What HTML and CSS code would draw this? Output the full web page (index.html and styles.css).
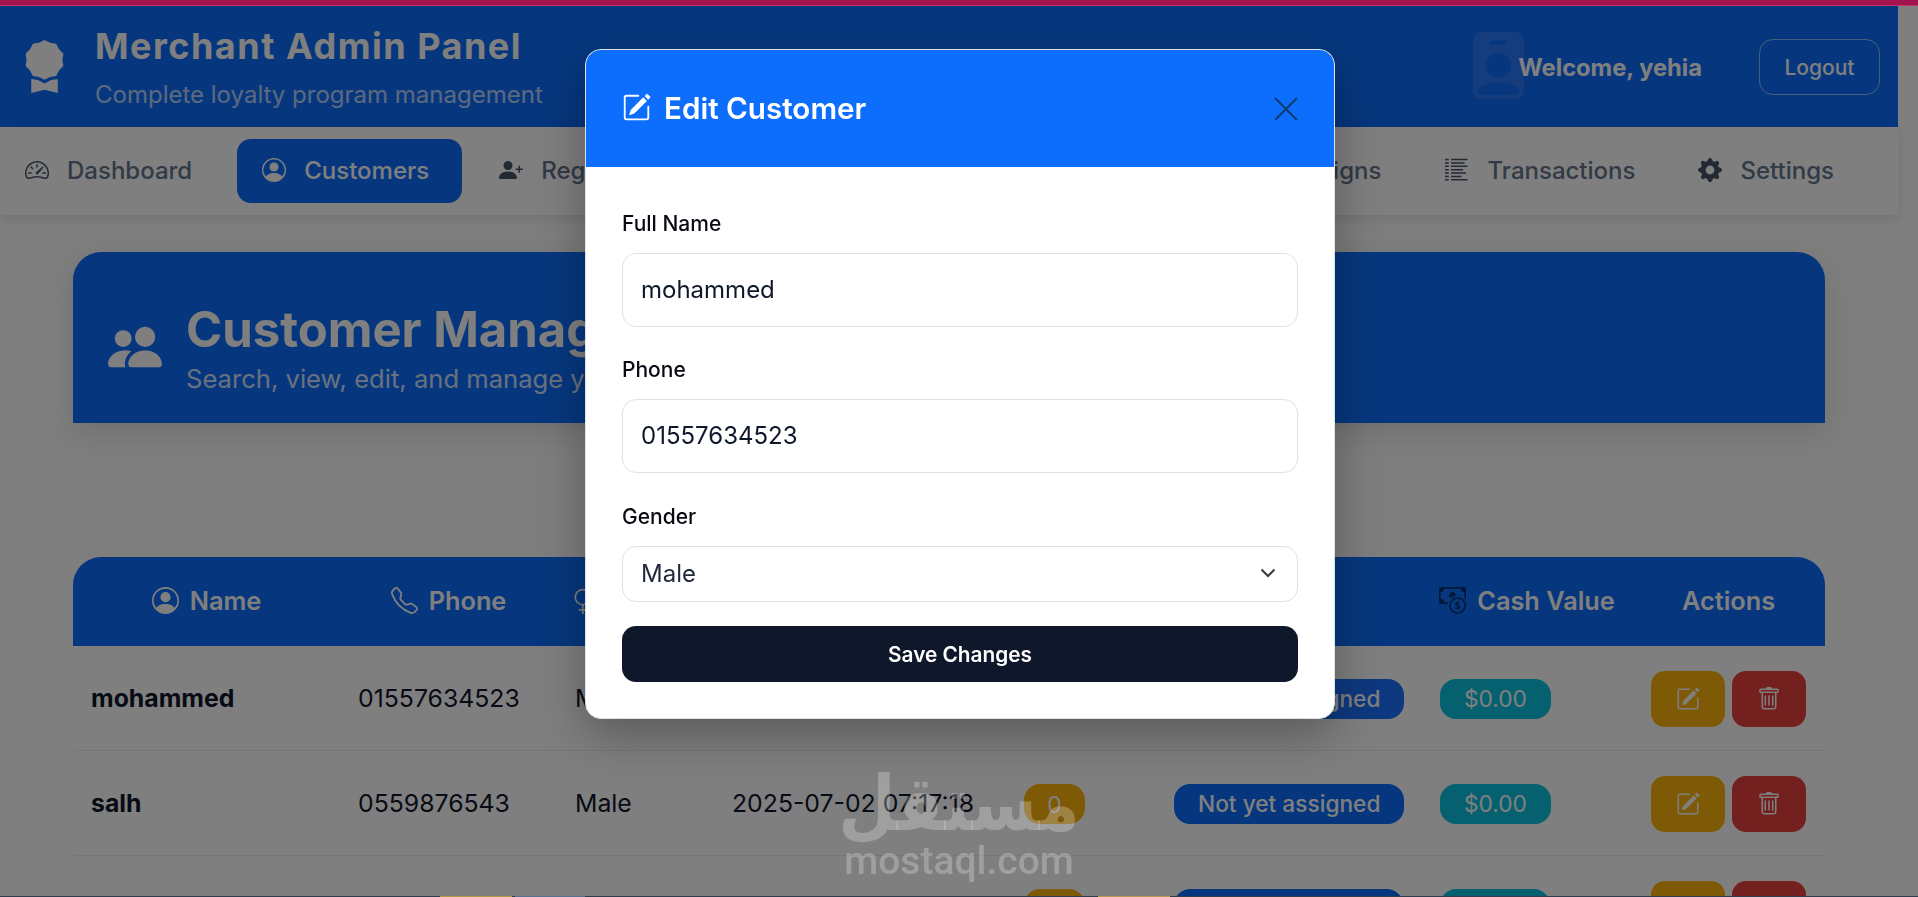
FILE: index.html
```html
<!DOCTYPE html>
<html lang="en">
<head>
<meta charset="utf-8">
<title>Merchant Admin Panel</title>
<link rel="stylesheet" href="styles.css">
</head>
<body>
<div class="page">
  <header class="topbar">
    <div class="brand">
      <svg class="brand-icon" viewBox="0 0 16 16" fill="currentColor"><path d="m8 0 1.669.864 1.858.282.842 1.68 1.337 1.32L13.4 6l.306 1.854-1.337 1.32-.842 1.68-1.858.282L8 12l-1.669-.864-1.858-.282-.842-1.68-1.337-1.32L2.6 6l-.306-1.854 1.337-1.32.842-1.68L6.331.864z"/><path d="M4 11.794V16l4-1 4 1v-4.206l-2.018.306L8 13.126 6.018 12.1z"/></svg>
      <div class="brand-text">
        <div class="brand-title">Merchant Admin Panel</div>
        <div class="brand-sub">Complete loyalty program management</div>
      </div>
    </div>
    <div class="user">
      <svg class="user-icon" viewBox="0 0 16 16" fill="currentColor"><path d="M2 2a2 2 0 0 1 2-2h8a2 2 0 0 1 2 2v12a2 2 0 0 1-2 2H4a2 2 0 0 1-2-2zm4.500 0a.5.5 0 0 0 0 1h3a.5.5 0 0 0 0-1zM8 11a3 3 0 1 0 0-6 3 3 0 0 0 0 6m5 2.755C12.146 12.825 10.623 12 8 12s-4.146.826-5 1.755V14a1 1 0 0 0 1 1h8a1 1 0 0 0 1-1z"/></svg>
      <span class="welcome">Welcome, yehia</span>
      <button class="logout">Logout</button>
    </div>
  </header>

  <nav class="nav">
    <a class="nav-link">
      <svg class="nav-icon" viewBox="0 0 16 16" fill="currentColor"><path d="M8 4a.5.5 0 0 1 .5.5V6a.5.5 0 0 1-1 0V4.500A.5.5 0 0 1 8 4M3.732 5.732a.5.5 0 0 1 .707 0l.915.914a.5.5 0 1 1-.708.708l-.914-.915a.5.5 0 0 1 0-.707M2 10a.5.5 0 0 1 .5-.5h1.586a.5.5 0 0 1 0 1H2.500A.5.5 0 0 1 2 10m9.500 0a.5.5 0 0 1 .5-.5h1.500a.5.5 0 0 1 0 1H12a.5.5 0 0 1-.5-.5m.754-4.246a.39.39 0 0 0-.527-.02L7.547 9.31a.91.91 0 1 0 1.302 1.258l3.434-4.297a.39.39 0 0 0-.029-.518z"/><path fill-rule="evenodd" d="M0 10a8 8 0 1 1 15.547 2.661c-.442 1.253-1.845 1.602-2.932 1.25C11.309 13.488 9.475 13 8 13c-1.474 0-3.31.488-4.615.911-1.087.352-2.49.003-2.932-1.25A8 8 0 0 1 0 10m8-7a7 7 0 0 0-6.603 9.329c.203.575.923.876 1.68.63C4.397 12.533 6.358 12 8 12s3.604.532 4.923.96c.757.245 1.477-.056 1.68-.631A7 7 0 0 0 8 3"/></svg>
      Dashboard
    </a>
    <a class="nav-link active">
      <svg class="nav-icon" viewBox="0 0 16 16" fill="currentColor"><path d="M11 6a3 3 0 1 1-6 0 3 3 0 0 1 6 0"/><path fill-rule="evenodd" d="M0 8a8 8 0 1 1 16 0A8 8 0 0 1 0 8m8-7a7 7 0 0 0-5.468 11.37C3.242 11.226 4.805 10 8 10s4.757 1.225 5.468 2.37A7 7 0 0 0 8 1"/></svg>
      Customers
    </a>
    <a class="nav-link">
      <svg class="nav-icon" viewBox="0 0 16 16" fill="currentColor"><path d="M1 14s-1 0-1-1 1-4 6-4 6 3 6 4-1 1-1 1zm5-6a3 3 0 1 0 0-6 3 3 0 0 0 0 6"/><path fill-rule="evenodd" d="M13.500 5a.5.5 0 0 1 .5.5V7h1.500a.5.5 0 0 1 0 1H14v1.500a.5.5 0 0 1-1 0V8h-1.500a.5.5 0 0 1 0-1H13V5.500a.5.5 0 0 1 .5-.5"/></svg>
      Register
    </a>
    <a class="nav-link push">Campaigns</a>
    <a class="nav-link">
      <svg class="nav-icon" viewBox="0 0 16 16" fill="currentColor"><path d="M0 .5h2.500v1H0zM4 .5h11v1H4zM0 2.800h2.500v1H0zM4 2.800h9v1H4zM0 5h2.500v1H0zM4 5h11v1H4zM0 7.300h2.500v1H0zM4 7.300h8v1H4zM0 9.500h2.500v1H0zM4 9.500h10v1H4zM0 11.800h2.500v1H0zM4 11.800h7v1H4zM0 14h2.500v1H0zM4 14h11v1H4z"/></svg>
      Transactions
    </a>
    <a class="nav-link">
      <svg class="nav-icon" viewBox="0 0 16 16" fill="currentColor"><path d="M9.405 1.050c-.413-1.400-2.397-1.400-2.810 0l-.1.34a1.464 1.464 0 0 1-2.105.872l-.31-.17c-1.283-.698-2.686.705-1.987 1.987l.169.311c.446.82.023 1.841-.872 2.105l-.34.1c-1.400.413-1.400 2.397 0 2.810l.34.1a1.464 1.464 0 0 1 .872 2.105l-.17.31c-.698 1.283.705 2.686 1.987 1.987l.311-.169a1.464 1.464 0 0 1 2.105.872l.1.34c.413 1.400 2.397 1.400 2.810 0l.1-.34a1.464 1.464 0 0 1 2.105-.872l.31.17c1.283.698 2.686-.705 1.987-1.987l-.169-.311a1.464 1.464 0 0 1 .872-2.105l.34-.1c1.400-.413 1.400-2.397 0-2.810l-.34-.1a1.464 1.464 0 0 1-.872-2.105l.17-.31c.698-1.283-.705-2.686-1.987-1.987l-.311.169a1.464 1.464 0 0 1-2.105-.872zM8 10.930a2.929 2.929 0 1 1 0-5.860 2.929 2.929 0 0 1 0 5.858z"/></svg>
      Settings
    </a>
  </nav>

  <main class="content">
    <section class="hero">
      <svg class="hero-icon" viewBox="0 0 16 16" fill="currentColor"><path d="M7 14s-1 0-1-1 1-4 5-4 5 3 5 4-1 1-1 1zm4-6a3 3 0 1 0 0-6 3 3 0 0 0 0 6m-5.784 6A2.240 2.240 0 0 1 5 13c0-1.355.68-2.750 1.936-3.720A6.300 6.300 0 0 0 5 9c-4 0-5 3-5 4s1 1 1 1zM4.500 8a2.500 2.500 0 1 0 0-5 2.500 2.500 0 0 0 0 5"/></svg>
      <div class="hero-text">
        <h1 class="hero-title">Customer Management</h1>
        <p class="hero-sub">Search, view, edit, and manage your customers</p>
      </div>
    </section>

    <table class="customers">
      <colgroup>
        <col class="c-name"><col class="c-phone"><col class="c-gender"><col class="c-date"><col class="c-points"><col class="c-tier"><col class="c-cash"><col class="c-actions">
      </colgroup>
      <thead>
        <tr>
          <th><svg class="th-icon" viewBox="0 0 16 16" fill="currentColor"><path d="M11 6a3 3 0 1 1-6 0 3 3 0 0 1 6 0"/><path fill-rule="evenodd" d="M0 8a8 8 0 1 1 16 0A8 8 0 0 1 0 8m8-7a7 7 0 0 0-5.468 11.37C3.242 11.226 4.805 10 8 10s4.757 1.225 5.468 2.37A7 7 0 0 0 8 1"/></svg>Name</th>
          <th><svg class="th-icon" viewBox="0 0 16 16" fill="currentColor"><path d="M3.654 1.328a.678.678 0 0 0-1.015-.063L1.605 2.300c-.483.484-.661 1.169-.45 1.770a17.600 17.600 0 0 0 4.168 6.608 17.600 17.600 0 0 0 6.608 4.168c.601.211 1.286.033 1.770-.45l1.034-1.034a.678.678 0 0 0-.063-1.015l-2.307-1.794a.68.68 0 0 0-.58-.122l-2.190.547a1.750 1.750 0 0 1-1.657-.459L5.482 8.062a1.750 1.750 0 0 1-.46-1.657l.548-2.190a.68.68 0 0 0-.122-.58zM1.884.511a1.745 1.745 0 0 1 2.612.163L6.290 2.980c.329.423.445.974.315 1.494l-.547 2.190a.68.68 0 0 0 .178.643l2.457 2.457a.68.68 0 0 0 .644.178l2.189-.547a1.750 1.750 0 0 1 1.494.315l2.306 1.794c.829.645.905 1.870.163 2.611l-1.034 1.034c-.74.74-1.846 1.065-2.877.702a18.600 18.600 0 0 1-7.010-4.420 18.600 18.600 0 0 1-4.420-7.009c-.362-1.030-.037-2.137.703-2.877z"/></svg>Phone</th>
          <th><svg class="th-icon" viewBox="0 0 16 16" fill="none" stroke="currentColor"><circle cx="7" cy="6" r="4.500"/><path d="M7 10.500V16M4.500 13.500h5"/></svg>Gender</th>
          <th>Registered</th>
          <th>Points</th>
          <th>Tier</th>
          <th><svg class="th-icon dark" viewBox="0 0 16 16" fill="currentColor"><path fill-rule="evenodd" d="M11 15a4 4 0 1 0 0-8 4 4 0 0 0 0 8m5-4a5 5 0 1 1-10 0 5 5 0 0 1 10 0"/><path d="M9.438 11.944c.047.596.518 1.060 1.363 1.116v.44h.375v-.443c.875-.061 1.386-.529 1.386-1.207 0-.618-.39-.936-1.090-1.100l-.296-.07v-1.200c.376.043.614.248.671.532h.658c-.047-.575-.54-1.024-1.329-1.073V8.500h-.375v.45c-.747.073-1.255.522-1.255 1.158 0 .562.378.92 1.007 1.066l.248.061v1.272c-.384-.058-.639-.27-.696-.563h-.668z"/><path d="M1 0a1 1 0 0 0-1 1v8a1 1 0 0 0 1 1h4.083q.088-.517.258-1H3a2 2 0 0 0-2-2V3a2 2 0 0 0 2-2h10a2 2 0 0 0 2 2v3.528c.38.34.717.728 1 1.154V1a1 1 0 0 0-1-1z"/><path d="M9.998 5.083 10 5a2 2 0 1 0-3.132 1.650 6 6 0 0 1 3.130-1.567"/></svg>Cash Value</th>
          <th>Actions</th>
        </tr>
      </thead>
      <tbody>
        <tr>
          <td class="name">mohammed</td><td>01557634523</td><td>Male</td><td>2025-07-02 07:17:18</td>
          <td><span class="badge points">0</span></td>
          <td><span class="badge tier bright">Not yet assigned</span></td>
          <td><span class="badge cash">$0.00</span></td>
          <td class="actions"><button class="act edit"><svg class="act-icon" viewBox="0 0 16 16" fill="currentColor"><path d="M15.502 1.940a.5.5 0 0 1 0 .706L14.459 3.690l-2-2L13.502.646a.5.5 0 0 1 .707 0l1.293 1.293zm-1.750 2.456-2-2L4.939 9.210a.5.5 0 0 0-.121.196l-.805 2.414a.25.25 0 0 0 .316.316l2.414-.805a.5.5 0 0 0 .196-.12l6.813-6.814z"/><path fill-rule="evenodd" d="M1 13.500A1.500 1.500 0 0 0 2.500 15h11a1.500 1.500 0 0 0 1.500-1.500v-6a.5.5 0 0 0-1 0v6a.5.5 0 0 1-.5.5h-11a.5.5 0 0 1-.5-.5v-11a.5.5 0 0 1 .5-.5H9a.5.5 0 0 0 0-1H2.500A1.500 1.500 0 0 0 1 2.500z"/></svg></button><button class="act del"><svg class="act-icon" viewBox="0 0 16 16" fill="currentColor"><path d="M5.500 5.500A.5.5 0 0 1 6 6v6a.5.5 0 0 1-1 0V6a.5.5 0 0 1 .5-.5m2.500 0a.5.5 0 0 1 .5.5v6a.5.5 0 0 1-1 0V6a.5.5 0 0 1 .5-.5m3 .5a.5.5 0 0 0-1 0v6a.5.5 0 0 0 1 0z"/><path d="M14.500 3a1 1 0 0 1-1 1H13v9a2 2 0 0 1-2 2H5a2 2 0 0 1-2-2V4h-.5a1 1 0 0 1-1-1V2a1 1 0 0 1 1-1H6a1 1 0 0 1 1-1h2a1 1 0 0 1 1 1h3.500a1 1 0 0 1 1 1zM4.118 4 4 4.059V13a1 1 0 0 0 1 1h6a1 1 0 0 0 1-1V4.059L11.882 4zM2.500 3h11V2h-11z"/></svg></button></td>
        </tr>
        <tr>
          <td class="name">salh</td><td>0559876543</td><td>Male</td><td>2025-07-02 07:17:18</td>
          <td><span class="badge points">0</span></td>
          <td><span class="badge tier">Not yet assigned</span></td>
          <td><span class="badge cash">$0.00</span></td>
          <td class="actions"><button class="act edit"><svg class="act-icon" viewBox="0 0 16 16" fill="currentColor"><path d="M15.502 1.940a.5.5 0 0 1 0 .706L14.459 3.690l-2-2L13.502.646a.5.5 0 0 1 .707 0l1.293 1.293zm-1.750 2.456-2-2L4.939 9.210a.5.5 0 0 0-.121.196l-.805 2.414a.25.25 0 0 0 .316.316l2.414-.805a.5.5 0 0 0 .196-.12l6.813-6.814z"/><path fill-rule="evenodd" d="M1 13.500A1.500 1.500 0 0 0 2.500 15h11a1.500 1.500 0 0 0 1.500-1.500v-6a.5.5 0 0 0-1 0v6a.5.5 0 0 1-.5.5h-11a.5.5 0 0 1-.5-.5v-11a.5.5 0 0 1 .5-.5H9a.5.5 0 0 0 0-1H2.500A1.500 1.500 0 0 0 1 2.500z"/></svg></button><button class="act del"><svg class="act-icon" viewBox="0 0 16 16" fill="currentColor"><path d="M5.500 5.500A.5.5 0 0 1 6 6v6a.5.5 0 0 1-1 0V6a.5.5 0 0 1 .5-.5m2.500 0a.5.5 0 0 1 .5.5v6a.5.5 0 0 1-1 0V6a.5.5 0 0 1 .5-.5m3 .5a.5.5 0 0 0-1 0v6a.5.5 0 0 0 1 0z"/><path d="M14.500 3a1 1 0 0 1-1 1H13v9a2 2 0 0 1-2 2H5a2 2 0 0 1-2-2V4h-.5a1 1 0 0 1-1-1V2a1 1 0 0 1 1-1H6a1 1 0 0 1 1-1h2a1 1 0 0 1 1 1h3.500a1 1 0 0 1 1 1zM4.118 4 4 4.059V13a1 1 0 0 0 1 1h6a1 1 0 0 0 1-1V4.059L11.882 4zM2.500 3h11V2h-11z"/></svg></button></td>
        </tr>
        <tr>
          <td class="name"></td><td></td><td></td><td></td>
          <td><span class="badge points"></span></td>
          <td><span class="badge tier"></span></td>
          <td><span class="badge cash"></span></td>
          <td class="actions"><button class="act edit"></button><button class="act del"></button></td>
        </tr>
      </tbody>
    </table>
  </main>
</div>

<div class="backdrop"></div>
<div class="pinkbar"></div>
<div class="edge"><span class="edge-a"></span><span class="edge-b"></span><span class="edge-c"></span></div>

<div class="modal-wrap">
  <div class="modal">
    <div class="modal-head">
      <h2 class="modal-title"><svg class="title-icon" viewBox="0 0 16 16" fill="currentColor"><path d="M15.502 1.940a.5.5 0 0 1 0 .706L14.459 3.690l-2-2L13.502.646a.5.5 0 0 1 .707 0l1.293 1.293zm-1.750 2.456-2-2L4.939 9.210a.5.5 0 0 0-.121.196l-.805 2.414a.25.25 0 0 0 .316.316l2.414-.805a.5.5 0 0 0 .196-.12l6.813-6.814z"/><path fill-rule="evenodd" d="M1 13.500A1.500 1.500 0 0 0 2.500 15h11a1.500 1.500 0 0 0 1.500-1.500v-6a.5.5 0 0 0-1 0v6a.5.5 0 0 1-.5.5h-11a.5.5 0 0 1-.5-.5v-11a.5.5 0 0 1 .5-.5H9a.5.5 0 0 0 0-1H2.500A1.500 1.500 0 0 0 1 2.500z"/></svg>Edit Customer</h2>
      <svg class="close" viewBox="0 0 24 24" fill="none" stroke="currentColor" stroke-width="2"><path d="M1 1l22 22M23 1L1 23"/></svg>
    </div>
    <form class="modal-body">
      <label class="label">Full Name</label>
      <input class="field" value="mohammed">
      <label class="label">Phone</label>
      <input class="field" value="01557634523">
      <label class="label label-gender">Gender</label>
      <div class="select-wrap">
        <select class="field select"><option>Male</option><option>Female</option></select>
        <svg class="chev" viewBox="0 0 16 10" fill="none" stroke="currentColor" stroke-width="2"><path d="M1.500 1.500 8 8l6.500-6.500"/></svg>
      </div>
      <button type="button" class="save">Save Changes</button>
    </form>
  </div>
</div>

<div class="watermark">
  <div class="wm-ar">مستقل</div>
  <div class="wm-en">mostaql.com</div>
</div>
</body>
</html>
```

FILE: styles.css
```css
* { box-sizing: border-box; }
html, body { margin: 0; height: 100%; overflow: hidden; }
body { font-family: "Inter", "Liberation Sans", sans-serif; background: #fdfdff; color: #0f172a; padding-right: 20px; }
svg { display: block; flex: none; }
button { font-family: inherit; cursor: pointer; }

.topbar { height: 127px; background: #0d6efd; color: #fff; display: flex; align-items: center; justify-content: space-between; padding: 0 18px 0 17px; }
.brand { display: flex; align-items: center; gap: 8px; padding-top: 9px; }
.brand-icon { width: 53px; height: 53px; margin-top: -4px; margin-left: 1px; }
.brand-title { font-size: 36px; font-weight: 700; line-height: 44px; letter-spacing: 1.5px; margin-left: 16px; }
.brand-sub { font-size: 24px; line-height: 34px; margin-top: 10px; margin-left: 16px; opacity: .7; }
.user { display: flex; align-items: center; padding-top: 7px; }
.user-icon { width: 67px; height: 67px; color: #2a7bfd; margin-right: -14px; margin-top: -4px; }
.welcome { font-size: 23.7px; font-weight: 700; margin-right: 57px; position: relative; }
.logout { width: 121px; height: 56px; background: transparent; border: 1px solid rgba(255,255,255,.55); border-radius: 14px; color: #fff; font-size: 21px; font-weight: 500; }

.nav { height: 88px; background: #fff; display: flex; align-items: center; gap: 4px; padding-right: 30px; box-shadow: 0 4px 12px rgba(0,0,0,.1); position: relative; }
.nav-link { height: 64px; display: flex; align-items: center; gap: 18px; padding: 0 34px 2px 25px; font-size: 24px; font-weight: 500; color: #64748b; border-radius: 14px; }
.nav-link.active { background: #0d6efd; color: #fff; margin: 0 8px 0 7px; padding-right: 33px; }
.nav-link.push { margin-left: auto; padding-right: 35px; }
.nav-icon { width: 24px; height: 24px; color: #475569; }
.nav-link.active .nav-icon { color: #fff; }

.content { padding: 37px 73px 0; }
.hero { height: 171px; background: #0d6efd; color: #fff; border-radius: 28px 28px 0 0; display: flex; align-items: center; gap: 24px; padding: 0 35px; box-shadow: 0 10px 30px rgba(0,0,0,.12); }
.hero-icon { width: 54px; height: 54px; margin-top: 18px; }
.hero-text { margin-top: 21px; }
.hero-title { font-size: 49px; font-weight: 700; line-height: 58px; margin: 0 0 3px; white-space: nowrap; }
.hero-sub { font-size: 25.6px; line-height: 34px; margin: 0; opacity: .8; white-space: nowrap; }

.customers { width: 100%; table-layout: fixed; border-collapse: separate; border-spacing: 0; margin-top: 134px; background: #fff; }
.c-name { width: 267px; } .c-phone { width: 217px; } .c-gender { width: 157px; } .c-date { width: 292px; }
.c-points { width: 150px; } .c-tier { width: 266px; } .c-cash { width: 210px; } .c-actions { width: 193px; }
.customers th { height: 89px; background: #0d6efd; color: #fff; font-size: 25.3px; font-weight: 600; text-align: center; white-space: nowrap; padding: 0 0 2px; }
.customers th:first-child { border-top-left-radius: 28px; }
.customers th:last-child { border-top-right-radius: 28px; }
.th-icon { display: inline-block; width: 27px; height: 27px; margin-right: 11px; vertical-align: -4px; }
.th-icon.dark { color: #000; opacity: .55; }
.customers td { height: 105px; padding: 0 18px; font-size: 24.8px; border-bottom: 1px solid #eaecf2; white-space: nowrap; }
.customers td.name { font-weight: 700; }
.badge { display: inline-flex; align-items: center; height: 40px; margin-top: 2px; padding: 0 24px 2px; border-radius: 16px; font-size: 22.7px; color: #fff; vertical-align: middle; }
.points { background: #ffb40c; min-width: 61px; justify-content: center; padding: 0; }
.tier { background: #0d6efd; font-weight: 500; min-width: 229px; }
.tier.bright { background: #1d71ff; }
.cash { background: #0bc2de; min-width: 110px; }
.actions { text-align: right; }
.customers td.actions { padding: 0 19px 0 0; }
.act { display: inline-flex; align-items: center; justify-content: center; width: 74px; height: 56px; margin: 2px 0 0 7px; border: 0; border-radius: 14px; color: #fff; vertical-align: middle; }
.act.edit { background: #ffb40c; }
.act.del { background: #e8403e; }
.act-icon { width: 24px; height: 24px; }

.backdrop { position: fixed; inset: 0; background: rgba(0,0,0,.5); }
.pinkbar { position: fixed; top: 0; left: 0; right: 0; height: 6px; background: #a3144f; border-bottom: 1px solid #c0356e; }
.edge { position: fixed; left: 0; right: 0; bottom: 0; height: 1px; background: #2f3d4a; }
.edge span { position: absolute; top: 0; height: 1px; }
.edge-a { left: 440px; width: 72px; background: #b09a45; }
.edge-b { left: 515px; width: 70px; background: #57718f; }
.edge-c { left: 1098px; width: 72px; background: #b89a55; }

.modal-wrap { position: fixed; inset: 0; display: flex; justify-content: center; padding: 49px 0 0 2px; }
.modal { width: 750px; height: 670px; background: #fff; border: 1px solid #dee2e6; border-radius: 16px; overflow: hidden; box-shadow: 0 16px 48px rgba(0,0,0,.3); }
.modal-head { height: 117px; background: #0d6efd; color: #fff; display: flex; align-items: center; justify-content: space-between; padding: 0 36px; }
.modal-title { margin: 0 0 2px; display: flex; align-items: center; gap: 13px; font-size: 29.6px; font-weight: 600; }
.title-icon { width: 29px; height: 29px; }
.close { width: 24px; height: 24px; color: #0d3b6e; }
.modal-body { padding: 42px 36px 37px 36px; }
.label { display: block; font-size: 21px; font-weight: 500; line-height: 30px; margin: 28px 0 14px; color: #0a0a14; }
.label:first-child { margin-top: 0; }
.label-gender { margin-top: 29px; }
.field { display: block; width: 100%; height: 74px; border: 1px solid #dee2e6; border-radius: 14px; padding: 0 18px 2px; font: 400 24px "Inter", sans-serif; color: #0f172a; background: #fff; outline: 0; }
.select-wrap { position: relative; }
.select { height: 56px; appearance: none; -webkit-appearance: none; color: #1e293b; }
.chev { position: absolute; right: 22px; top: 22px; width: 16px; height: 10px; color: #343a40; }
.save { display: block; width: 100%; height: 56px; margin-top: 24px; background: #0f172a; border: 0; border-radius: 14px; color: #fff; font-size: 20.8px; font-weight: 600; }

.watermark { position: fixed; left: 844px; top: 769px; width: 230px; text-align: center; color: rgba(255,255,255,.25); pointer-events: none; }
.wm-ar { display: flex; justify-content: center; font-family: "DejaVu Sans", sans-serif; font-weight: 700; font-size: 66px; line-height: 72px; transform: scaleY(1.15); white-space: nowrap; }
.wm-en { font-family: "Roboto", "Inter", sans-serif; font-weight: 500; font-size: 39px; line-height: 40px; white-space: nowrap; }
```
